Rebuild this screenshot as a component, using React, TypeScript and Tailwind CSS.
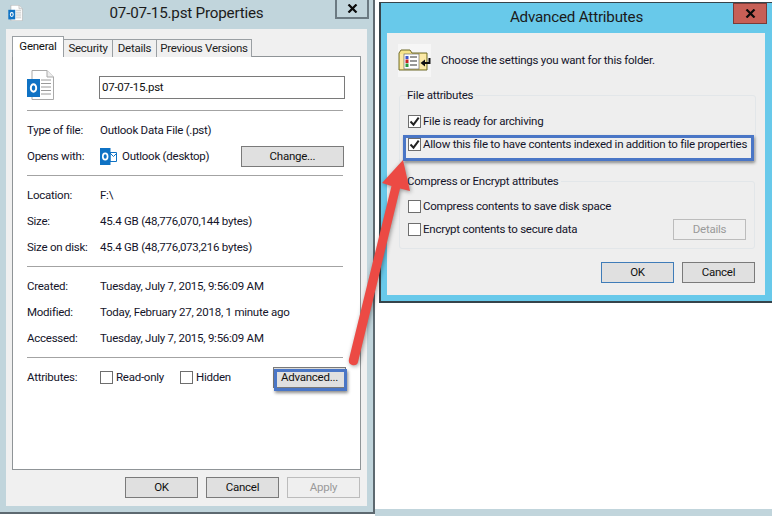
import type { ReactNode } from "react";

const FONT = "font-['Roboto','Noto_Sans',sans-serif] tracking-[-0.25px]";

function OutlookDoc({ className }: { className: string }) {
  return (
    <svg viewBox="0 0 27 30" className={className}>
      <path d="M5 .5h15l6.5 6.5v22.5H5z" fill="#fff" stroke="#a9a9a9" />
      <path d="M20 .5V7h6.5" fill="#eee" stroke="#a9a9a9" />
      <path d="M14 10h10M14 13.5h10M14 17h10M14 20.5h10M14 24h10" stroke="#9a9a9a" />
      <rect x="0" y="9" width="13" height="18" fill="#0f72c4" />
      <ellipse cx="6.5" cy="18" rx="2.7" ry="3.7" fill="none" stroke="#fff" strokeWidth="1.9" />
    </svg>
  );
}

function OutlookApp() {
  return (
    <svg viewBox="0 0 17 17" className="h-[17px] w-[17px] shrink-0">
      <path d="M10 4.500h6.500v9H10z" fill="#fff" stroke="#0f72c4" />
      <path d="M10 5l3.500 3.500L17 5" fill="none" stroke="#0f72c4" />
      <rect x="0" y="0" width="10.500" height="17" fill="#0f72c4" />
      <ellipse cx="5.200" cy="8.500" rx="2.400" ry="3.200" fill="none" stroke="#fff" strokeWidth="1.700" />
    </svg>
  );
}

function FolderIcon() {
  return (
    <svg viewBox="0 0 33 33" className="h-[33px] w-[33px] shrink-0 bg-[#f6f6f6]">
      <path d="M1 9l2-3h9l2 3h15v17H1z" fill="#f6e48a" stroke="#6f6a2a" />
      <path d="M2 10h26v15H2z" fill="#fbe9a6" />
      <rect x="6" y="10" width="15" height="15" fill="#fff" stroke="#555" strokeWidth=".6" />
      <path d="M7.500 12h3v3h-3z" fill="#3f55c8" />
      <path d="M7.500 15.500h3v3.500h-3z" fill="#c62222" />
      <path d="M7.500 19.500h3v3.500h-3z" fill="#2e9a3e" />
      <path d="M12 13h7M12 17h7M12 21h7" stroke="#333" strokeWidth="1.200" />
      <path d="M31.500 14v5h-6" fill="none" stroke="#111" strokeWidth="2" />
      <path d="M27 15.500v7l-4.500-3.500z" fill="#111" />
    </svg>
  );
}

function CloseX() {
  return (
    <svg viewBox="0 0 11 9" className="h-[9px] w-[11px]">
      <path d="M1.500.5l8 8M9.500.5l-8 8" stroke="#0b0b0b" strokeWidth="2.200" />
    </svg>
  );
}

function Btn({ children, tone = "normal", className = "w-[73px]" }: { children: ReactNode; tone?: "normal" | "primary" | "disabled"; className?: string }) {
  const toneClass =
    tone === "disabled"
      ? "bg-[#efefef] border-[#bcbcbc] text-[#9a9a9a]"
      : tone === "primary"
        ? "bg-[#e0e0e0] border-[#3f7cb8] text-[#111]"
        : "bg-[#e0e0e0] border-[#7a7a7a] text-[#111]";
  return (
    <div className={`flex h-[21px] shrink-0 items-center justify-center border text-[11.500px] ${toneClass} ${className}`}>
      {children}
    </div>
  );
}

function Checkbox({ checked = false }: { checked?: boolean }) {
  return (
    <div className="flex h-[13px] w-[13px] shrink-0 items-center justify-center border border-[#6e6e6e] bg-white">
      {checked && (
        <svg viewBox="0 0 11 11" className="h-[11px] w-[11px]">
          <path d="M1.500 5.500l3 3.200 5.200-7" fill="none" stroke="#222" strokeWidth="2" />
        </svg>
      )}
    </div>
  );
}

function Separator() {
  return <div className="h-px w-[316px] bg-[#a3a3a3]" />;
}

function InfoRow({ label, children }: { label: string; children: ReactNode }) {
  return (
    <div className="flex h-[26px] items-center whitespace-nowrap pt-px text-[11.500px] text-[#14142a]">
      <div className="w-[73px] shrink-0">{label}</div>
      {children}
    </div>
  );
}

function Tab({ label, className }: { label: string; className: string }) {
  return (
    <div className={`flex h-[18px] items-center justify-center whitespace-nowrap border border-b-0 border-[#9a9fa3] bg-[#f0f0f0] text-[11.500px] text-[#222] ${className}`}>
      {label}
    </div>
  );
}

function Group({ title, children }: { title: string; children: ReactNode }) {
  return (
    <fieldset className="h-[76px] w-[356px] rounded-[3px] border border-[#e2e6e9]">
      <legend className="ml-[7px] h-[16px] pr-[2px] text-[11.500px] leading-[16px] text-[#14142a]">{title}</legend>
      {children}
    </fieldset>
  );
}

function CheckRow({ label, checked, children }: { label: string; checked?: boolean; children?: ReactNode }) {
  return (
    <div className="flex h-[23px] items-center pl-[8px] pr-[8px] text-[11.500px] text-[#14142a]">
      <Checkbox checked={checked} />
      <span className="ml-[2px] flex-1 whitespace-nowrap">{label}</span>
      {children}
    </div>
  );
}

function PropertiesWindow() {
  return (
    <div className="h-[514px] w-[375px] shrink-0 border-r-2 border-b-2 border-[#5d6970] bg-[#c1d5dc]">
      <div className="grid h-[29px] grid-cols-[1fr_auto_1fr]">
        <div className="pl-[8px] pt-[5px]">
          <OutlookDoc className="h-[16px] w-[15px]" />
        </div>
        <div className="pt-[3px] text-[15.200px] leading-[21px] tracking-[-0.2px] text-[#1b1b1b]">07-07-15.pst Properties</div>
        <div className="flex justify-end pr-[4px]">
          <div className="flex h-[19px] w-[34px] items-center justify-center border-r-2 border-b-2 border-l-2 border-[#6b7a82]">
            <CloseX />
          </div>
        </div>
      </div>

      <div className="ml-[6px] h-[477px] w-[361px] bg-[#f0f0f0] px-[6px] pt-[7px]">
        <div className="relative z-10 flex h-[21px] items-end">
          <div className="flex h-[21px] w-[52px] items-center justify-center border border-b-0 border-[#9a9fa3] bg-white text-[11.500px] text-[#111]">General</div>
          <Tab label="Security" className="w-[49px] border-l-0" />
          <Tab label="Details" className="w-[44px] border-l-0" />
          <Tab label="Previous Versions" className="w-[95px] border-l-0" />
        </div>
        <div className="-mt-px h-[414px] w-[349px] border border-[#8f9497] bg-white pl-[14px]">
          <div className="mt-[13px] flex h-[30px]">
            <OutlookDoc className="h-[30px] w-[27px]" />
            <div className="ml-[45px] mt-[6px] flex h-[23px] w-[246px] items-center border border-[#7a7a7a] pl-[2px] text-[11.500px] text-[#111]">
              07-07-15.pst
            </div>
          </div>
          <div className="mt-[10px]">
            <Separator />
          </div>
          <div className="mt-[6px]">
            <InfoRow label="Type of file:">Outlook Data File (.pst)</InfoRow>
            <InfoRow label="Opens with:">
              <OutlookApp />
              <span className="ml-[5px] flex-1">Outlook (desktop)</span>
              <Btn className="mr-[16px] w-[103px]">Change...</Btn>
            </InfoRow>
          </div>
          <div className="mt-[6px]">
            <Separator />
          </div>
          <div className="mt-[6px]">
            <InfoRow label="Location:">F:\</InfoRow>
            <InfoRow label="Size:">45.4 GB (48,776,070,144 bytes)</InfoRow>
            <InfoRow label="Size on disk:">45.4 GB (48,776,073,216 bytes)</InfoRow>
          </div>
          <div className="mt-[6px]">
            <Separator />
          </div>
          <div className="mt-[6px]">
            <InfoRow label="Created:">Tuesday, July 7, 2015, 9:56:09 AM</InfoRow>
            <InfoRow label="Modified:">Today, February 27, 2018, 1 minute ago</InfoRow>
            <InfoRow label="Accessed:">Tuesday, July 7, 2015, 9:56:09 AM</InfoRow>
          </div>
          <div className="mt-[6px]">
            <Separator />
          </div>
          <div className="mt-[6px]">
            <InfoRow label="Attributes:">
              <Checkbox />
              <span className="ml-[3px] w-[64px]">Read-only</span>
              <Checkbox />
              <span className="ml-[3px] flex-1">Hidden</span>
              <Btn className="mr-[14px] w-[73px]">Advanced...</Btn>
            </InfoRow>
          </div>
        </div>
        <div className="mt-[7px] flex w-[348px] justify-end gap-[8px]">
          <Btn>OK</Btn>
          <Btn>Cancel</Btn>
          <Btn tone="disabled">Apply</Btn>
        </div>
      </div>
    </div>
  );
}

function AdvancedDialog() {
  return (
    <div className="ml-[4px] h-[301px] border-t border-b-2 border-l-2 border-[#36444b] bg-[#68c9ea]">
      <div className="flex h-[30px] items-start justify-center">
        <div className="pt-[4px] text-[15.200px] leading-[21px] tracking-[-0.2px] text-[#1b1b1b]">Advanced Attributes</div>
      </div>
      <div className="ml-[6px] h-[262px] w-[378px] bg-[#eeeeee] pl-[12px] pt-[11px]">
        <div className="-ml-px flex h-[33px] items-center text-[11.500px] text-[#14142a]">
          <FolderIcon />
          <span className="ml-[10px]">Choose the settings you want for this folder.</span>
        </div>
        <div className="mt-[10px]">
          <Group title="File attributes">
            <div className="pt-[7px]">
              <CheckRow label="File is ready for archiving" checked />
              <CheckRow label="Allow this file to have contents indexed in addition to file properties" checked />
            </div>
          </Group>
        </div>
        <div className="mt-[10px]">
          <Group title="Compress or Encrypt attributes">
            <div className="pt-[6px]">
              <CheckRow label="Compress contents to save disk space" />
              <CheckRow label="Encrypt contents to secure data">
                <Btn tone="disabled">Details</Btn>
              </CheckRow>
            </div>
          </Group>
        </div>
        <div className="mt-[13px] flex w-[356px] justify-end gap-[8px]">
          <Btn tone="primary">OK</Btn>
          <Btn>Cancel</Btn>
        </div>
      </div>
    </div>
  );
}

export default function App() {
  return (
    <div className={`relative flex h-[516px] w-[772px] overflow-hidden bg-white ${FONT}`}>
      <PropertiesWindow />
      <div className="flex min-w-0 flex-1 flex-col">
        {/* bit of the explorer list peeking out above the dialog */}
        <div className="flex h-[2px] items-end overflow-hidden pl-[3px] text-[11.500px] leading-[14px] text-[#444]">
          <span className="w-[78px] shrink-0">Data File</span>
          <span>7/7/2015 9:56 AM</span>
        </div>
        <AdvancedDialog />
        <div className="flex-1" />
        <div className="h-[7px] bg-[#c1d5dc]" />
      </div>

      {/* close button of the dialog sits on the title bar */}
      <div className="absolute left-[733px] top-[3px] flex h-[21px] w-[34px] items-center justify-center border border-[#7a3b38] bg-[#c75f56]">
        <CloseX />
      </div>

      {/* screenshot annotations */}
      <div className="absolute left-[274px] top-[369px] h-[22px] w-[73px] border-[3px] border-[#4a76c6] shadow-[1px_2px_3px_rgba(0,0,0,0.45)]" />
      <div className="absolute left-[403px] top-[135px] h-[26px] w-[351px] border-[3px] border-[#4a76c6] shadow-[1px_2px_3px_rgba(0,0,0,0.4)]" />
      <svg viewBox="0 0 772 516" className="absolute left-0 top-0 h-[516px] w-[772px] drop-shadow-[1px_1px_2px_rgba(0,0,0,0.4)]">
        <path d="M403 160L382 183L391.500 186L349 359Q348 364 352 365Q357 366 358 362L400 188.500L410 191Z" fill="#ec4a44" />
      </svg>
    </div>
  );
}
